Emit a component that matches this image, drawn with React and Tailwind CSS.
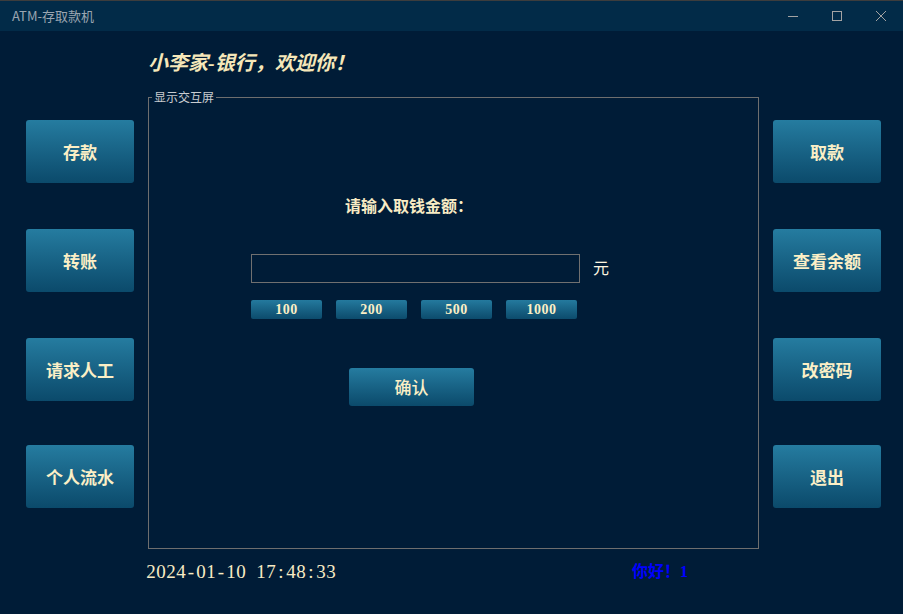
const CJK = '"Noto Sans CJK SC", "Noto Sans", sans-serif';
const SERIF = '"Liberation Serif", "Noto Sans CJK SC", serif';

function SideButton({ label, className = "" }) {
  return (
    <button
      className={`w-[108px] h-[63px] rounded-[3px] bg-gradient-to-b from-[#257ca0] to-[#0b4a6b] text-[#fbefc6] text-[17px] font-bold ${className}`}
      style={{ fontFamily: CJK }}
    >
      {label}
    </button>
  );
}

function QuickButton({ amount }) {
  return (
    <button
      className="w-[71px] h-[19px] rounded-[2px] bg-gradient-to-b from-[#247a9e] to-[#0c4b6c] text-[#fbefc6] text-[14px] font-bold tracking-[0.5px] leading-[19px]"
      style={{ fontFamily: SERIF }}
    >
      {amount}
    </button>
  );
}

// fixed-pitch clock, every char gets the same 10px cell
function Clock({ text }) {
  return (
    <span className="flex w-[486px] text-[19px] leading-[24px] text-[#f8ebc4]" style={{ fontFamily: SERIF }}>
      {text.split("").map((ch, i) => (
        <span key={i} className="inline-block w-[10px] text-center">
          {ch === " " ? "\u00a0" : ch}
        </span>
      ))}
    </span>
  );
}

export default function App() {
  return (
    <div className="w-[903px] h-[614px] bg-[#001c37] flex flex-col overflow-hidden">
      {/* title bar */}
      <div className="h-[31px] border-t border-[#3d3d3d] bg-[#022b48] flex items-center shrink-0">
        <span className="ml-[12px] text-[13px] text-[#9aa5b0]" style={{ fontFamily: CJK }}>
          ATM-存取款机
        </span>
        <div className="ml-auto flex items-center">
          <svg width="12" height="12" viewBox="0 0 12 12" className="mr-[32px]">
            <path d="M1 6.5h10" stroke="#a3a3a3" strokeWidth="1" />
          </svg>
          <svg width="12" height="12" viewBox="0 0 12 12" className="mr-[32px]">
            <rect x="1.5" y="1.5" width="9" height="9" fill="none" stroke="#a3a3a3" strokeWidth="1" />
          </svg>
          <svg width="12" height="12" viewBox="0 0 12 12" className="mr-[16px]">
            <path d="M1 1l10 10M11 1L1 11" stroke="#a3a3a3" strokeWidth="1" />
          </svg>
        </div>
      </div>

      <div className="flex flex-1">
        {/* left buttons */}
        <div className="flex flex-col pl-[26px] pt-[89px]">
          <SideButton label="存款" />
          <SideButton label="转账" className="mt-[46px]" />
          <SideButton label="请求人工" className="mt-[46px]" />
          <SideButton label="个人流水" className="mt-[44px]" />
        </div>

        {/* center */}
        <div className="flex flex-col w-[611px] ml-[14px]">
          <div
            className="mt-[18px] h-[28px] leading-[28px] text-[20px] italic font-bold text-[#f5e7b9]"
            style={{ fontFamily: SERIF }}
          >
            小李家-银行，欢迎你！
          </div>

          <fieldset className="mt-[12px] h-[460px] border border-[#6e6e6e]">
            <legend
              className="ml-[3px] px-[2px] text-[12px] leading-[16px] text-[#c9ccd0]"
              style={{ fontFamily: CJK }}
            >
              显示交互屏
            </legend>
            <div className="flex flex-col pl-[102px]">
              <div
                className="mt-[89px] ml-[94px] text-[16px] leading-[22px] font-bold text-[#f8ebc4]"
                style={{ fontFamily: CJK }}
              >
                请输入取钱金额：
              </div>
              <div className="mt-[38px] flex items-center">
                <input
                  className="w-[329px] h-[29px] border border-[#707070] bg-transparent outline-none text-white px-1"
                  type="text"
                />
                <span className="ml-[13px] -mt-[3px] text-[16px] text-[#fdf6e0]" style={{ fontFamily: CJK }}>
                  元
                </span>
              </div>
              <div className="mt-[17px] flex gap-[14px]">
                <QuickButton amount="100" />
                <QuickButton amount="200" />
                <QuickButton amount="500" />
                <QuickButton amount="1000" />
              </div>
              <button
                className="mt-[49px] ml-[98px] w-[125px] h-[38px] rounded-[3px] bg-gradient-to-b from-[#257ca0] to-[#0b4a6b] text-[#fbefc6] text-[17px] font-medium"
                style={{ fontFamily: CJK }}
              >
                确认
              </button>
            </div>
          </fieldset>

          <div className="mt-[11px] flex items-center -ml-[2px]">
            <Clock text="2024-01-10 17:48:33" />
            <span className="text-[16px] font-bold text-[#0000ff]" style={{ fontFamily: SERIF }}>
              你好！1
            </span>
          </div>
        </div>

        {/* right buttons */}
        <div className="flex flex-col ml-[14px] pt-[89px]">
          <SideButton label="取款" />
          <SideButton label="查看余额" className="mt-[46px]" />
          <SideButton label="改密码" className="mt-[46px]" />
          <SideButton label="退出" className="mt-[44px]" />
        </div>
      </div>
    </div>
  );
}
